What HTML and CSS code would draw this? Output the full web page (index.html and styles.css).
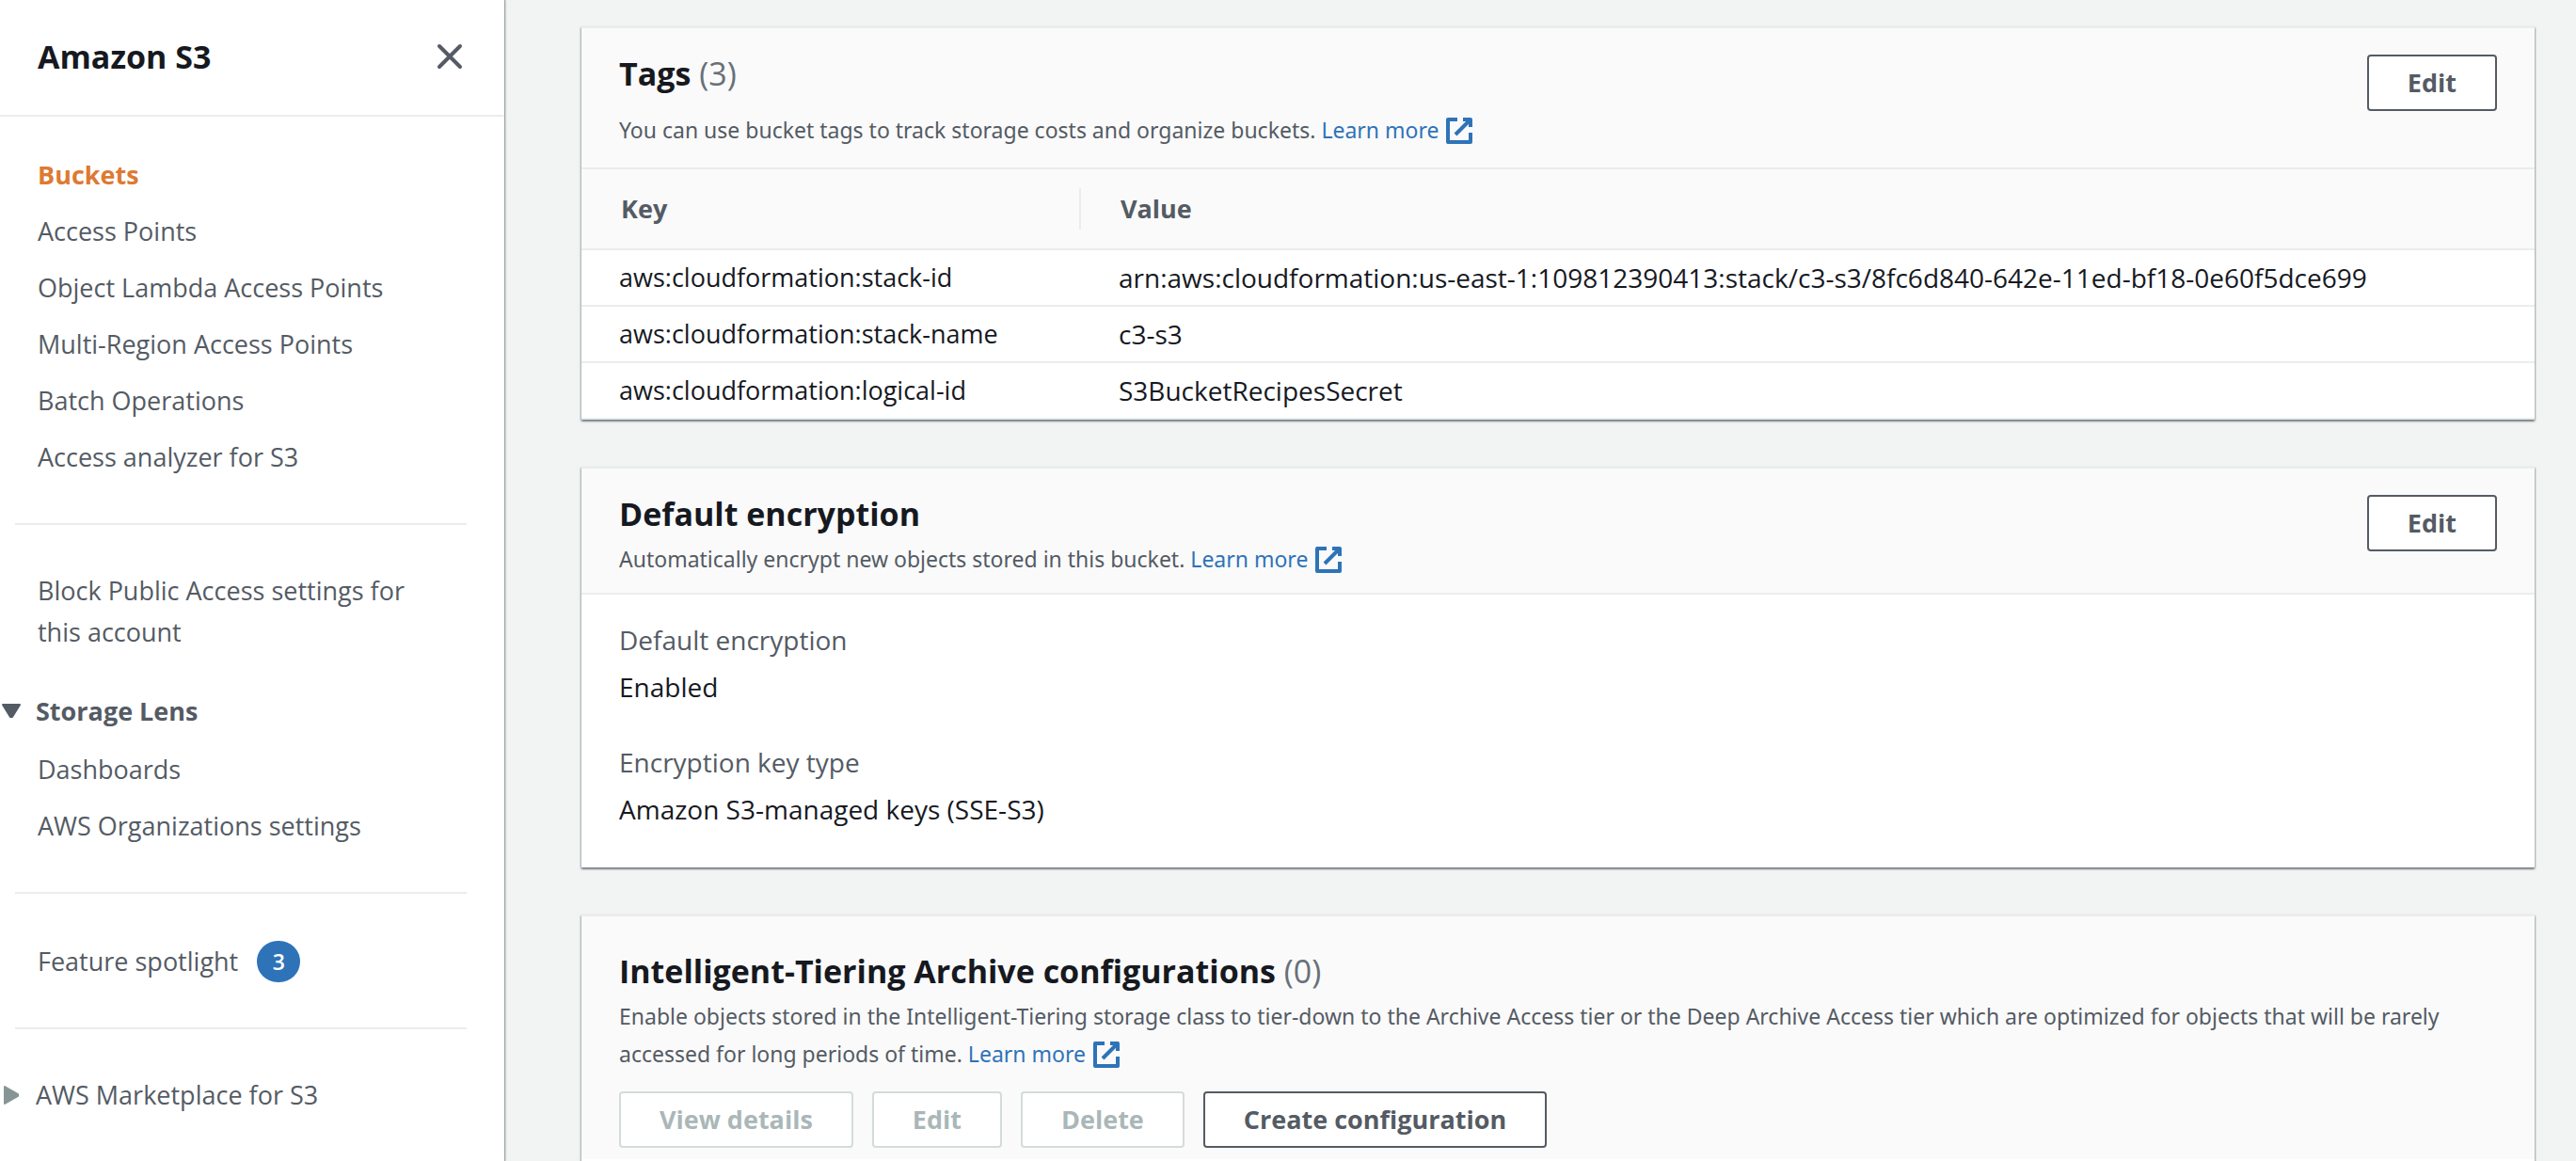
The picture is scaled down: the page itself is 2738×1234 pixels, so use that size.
FILE: index.html
```html
<!DOCTYPE html>
<html lang="en">
<head>
<meta charset="utf-8">
<meta name="viewport" content="width=device-width, initial-scale=1">
<title>Amazon S3 - Bucket properties</title>
<link rel="stylesheet" href="styles.css">
</head>
<body>
<svg class="sprite" aria-hidden="true">
  <symbol id="external" viewBox="0 0 16 16"><path d="M10 2h4v4M6 10l8-8M14 9.048V14H2V2h5" fill="none" stroke="currentColor" stroke-width="2" stroke-linejoin="round"/></symbol>
</svg>
<div class="layout">
  <aside class="sidebar">
    <header class="sidebar-header">
      <h2 class="sidebar-title">Amazon S3</h2>
      <button class="close" type="button" aria-label="Close navigation">
        <svg viewBox="0 0 32 32"><path d="M5 5l22 22M27 5L5 27" fill="none" stroke="currentColor" stroke-width="4" stroke-linecap="round"/></svg>
      </button>
    </header>
    <nav class="nav" aria-label="Amazon S3">
      <ul class="nav-list">
        <li><a class="active" href="#buckets" aria-current="page">Buckets</a></li>
        <li><a href="#access-points">Access Points</a></li>
        <li><a href="#object-lambda">Object Lambda Access Points</a></li>
        <li><a href="#multi-region">Multi-Region Access Points</a></li>
        <li><a href="#batch">Batch Operations</a></li>
        <li><a href="#analyzer">Access analyzer for S3</a></li>
      </ul>
      <hr class="divider">
      <ul class="nav-list">
        <li><a href="#block-public-access">Block Public Access settings for this account</a></li>
      </ul>
      <button class="toggle toggle-open" type="button" aria-expanded="true">
        <svg class="caret" viewBox="0 0 20 20"><path d="M1 3h18L11 16H9z" fill="currentColor" stroke="currentColor" stroke-width="2" stroke-linejoin="round"/></svg>
        Storage Lens
      </button>
      <ul class="nav-list">
        <li><a href="#dashboards">Dashboards</a></li>
        <li><a href="#organizations">AWS Organizations settings</a></li>
      </ul>
      <hr class="divider">
      <ul class="nav-list">
        <li><a class="spotlight" href="#spotlight">Feature spotlight <span class="badge">3</span></a></li>
      </ul>
      <hr class="divider">
      <button class="toggle" type="button" aria-expanded="false">
        <svg class="caret caret-closed" viewBox="0 0 20 20"><path d="M3 1v18l14-8V9z" fill="currentColor" stroke="currentColor" stroke-width="2" stroke-linejoin="round"/></svg>
        AWS Marketplace for S3
      </button>
    </nav>
  </aside>

  <main class="content">
    <section class="card">
      <header class="card-header header-tags">
        <div class="heading">
          <h2>Tags <span class="count">(3)</span></h2>
          <p>You can use bucket tags to track storage costs and organize buckets. <a href="#tags-help">Learn more <svg class="external"><use href="#external"/></svg></a></p>
        </div>
        <button class="button" type="button">Edit</button>
      </header>
      <table class="tags">
        <thead>
          <tr><th class="key" scope="col"><div>Key</div></th><th scope="col">Value</th></tr>
        </thead>
        <tbody>
          <tr><td>aws:cloudformation:stack-id</td><td class="value">arn:aws:cloudformation:us-east-1:109812390413:stack/c3-s3/8fc6d840-642e-11ed-bf18-0e60f5dce699</td></tr>
          <tr><td>aws:cloudformation:stack-name</td><td class="value">c3-s3</td></tr>
          <tr><td>aws:cloudformation:logical-id</td><td class="value">S3BucketRecipesSecret</td></tr>
        </tbody>
      </table>
    </section>

    <section class="card">
      <header class="card-header header-encryption">
        <div class="heading">
          <h2>Default encryption</h2>
          <p>Automatically encrypt new objects stored in this bucket. <a href="#encryption-help">Learn more <svg class="external"><use href="#external"/></svg></a></p>
        </div>
        <button class="button" type="button">Edit</button>
      </header>
      <dl class="details">
        <div><dt>Default encryption</dt><dd>Enabled</dd></div>
        <div><dt>Encryption key type</dt><dd>Amazon S3-managed keys (SSE-S3)</dd></div>
      </dl>
    </section>

    <section class="card card-last">
      <header class="card-header header-tiering">
        <div class="heading">
          <h2>Intelligent-Tiering Archive configurations <span class="count">(0)</span></h2>
          <p>Enable objects stored in the Intelligent-Tiering storage class to tier-down to the Archive Access tier or the Deep Archive Access tier which are optimized for objects that will be rarely accessed for long periods of time. <a href="#tiering-help">Learn more <svg class="external"><use href="#external"/></svg></a></p>
        </div>
        <div class="actions">
          <button class="button" type="button" disabled>View details</button>
          <button class="button" type="button" disabled>Edit</button>
          <button class="button" type="button" disabled>Delete</button>
          <button class="button" type="button">Create configuration</button>
        </div>
      </header>
    </section>
  </main>
</div>
</body>
</html>
```
FILE: styles.css
```css
:root {
  --text: #16191f;
  --muted: #545b64;
  --line: #eaeded;
  --link: #2e73b8;
  --accent: #dd7a33;
}

* { box-sizing: border-box; }

body {
  margin: 0;
  background: #f2f3f3;
  color: var(--text);
  font: 27px/44px "Open Sans", "Noto Sans", sans-serif;
}

h2, p, ul, dl, dd { margin: 0; padding: 0; }
h2 { font-size: 34px; line-height: 40px; font-weight: 700; }
ul { list-style: none; }
a { color: var(--link); text-decoration: none; }
button { font: inherit; cursor: pointer; }
svg { display: block; }

.sprite { position: absolute; width: 0; height: 0; }

.layout {
  display: flex;
  min-height: 100vh;
}

/* Side navigation */
.sidebar {
  flex: 0 0 536px;
  background: #fff;
  color: var(--muted);
  box-shadow: 1px 0 1px rgba(0, 28, 36, .3), 2px 0 2px rgba(0, 28, 36, .1);
}

.sidebar-header {
  display: flex;
  align-items: center;
  justify-content: space-between;
  height: 124px;
  padding: 0 42px 2px 40px;
  border-bottom: 2px solid var(--line);
}

.sidebar-title { color: var(--text); }

.close {
  padding: 0;
  border: 0;
  background: none;
  color: inherit;
}

.close svg { width: 32px; height: 32px; }

.nav { padding: 32px 40px 24px 0; }

.nav-list a {
  display: block;
  padding: 8px 40px;
  color: inherit;
}

.nav-list .active { color: var(--accent); font-weight: 700; }

.divider {
  margin: 40px 0 40px 16px;
  border: 0;
  border-top: 2px solid var(--line);
}

.toggle {
  display: flex;
  align-items: center;
  gap: 16px;
  width: 100%;
  padding: 8px 0 8px 2px;
  border: 0;
  background: none;
  color: inherit;
  text-align: left;
}

.toggle-open {
  margin-top: 24px;
  padding-bottom: 10px;
  font-weight: 700;
}

.caret { width: 20px; height: 20px; }
.caret-closed { color: #879596; }

.nav-list .spotlight {
  display: flex;
  align-items: center;
  gap: 20px;
  padding: 10px 40px 8px;
}

.badge {
  width: 46px;
  border-radius: 22px;
  background: var(--link);
  color: #fff;
  font-size: 23px;
  font-weight: 600;
  text-align: center;
}

/* Cards */
.content {
  flex: 1;
  min-width: 0;
  display: flex;
  flex-direction: column;
  gap: 50px;
  padding: 28px 44px 0 82px;
}

.card {
  border-top: 2px solid var(--line);
  background: #fff;
  box-shadow: 0 2px 2px rgba(0, 28, 36, .4), 1px 1px 2px rgba(0, 28, 36, .2), -1px 1px 2px rgba(0, 28, 36, .2);
}

.card-header {
  display: flex;
  align-items: flex-start;
  justify-content: space-between;
  gap: 40px;
  padding: 28px 40px 20px;
  border-bottom: 2px solid var(--line);
  background: #fafafa;
}

.heading p {
  margin-top: 8px;
  color: var(--muted);
  font-family: "Noto Sans", "Open Sans", sans-serif;
  font-size: 23px;
  line-height: 40px;
}

.header-tags .heading p { margin-top: 20px; }
.header-encryption { padding-bottom: 16px; }

.count { color: #687078; font-weight: 400; }

.external {
  display: inline-block;
  width: 32px;
  height: 32px;
  vertical-align: -8px;
}

.button {
  flex: none;
  height: 60px;
  padding: 0 41px;
  border: 2px solid var(--muted);
  border-radius: 4px;
  background: #fff;
  color: var(--muted);
  font-weight: 700;
  line-height: 40px;
}

.button:disabled {
  border-color: #d5dbdb;
  color: #aab7b8;
  cursor: default;
}

.tags {
  width: 100%;
  border-collapse: separate;
  border-spacing: 0;
  table-layout: fixed;
}

.tags th {
  padding: 20px 42px;
  border-bottom: 2px solid var(--line);
  background: #fafafa;
  color: var(--muted);
  text-align: left;
}

.tags .key { width: 531px; padding-right: 0; }
.key div { border-right: 2px solid var(--line); }

.tags td {
  padding: 7px 40px;
  border-bottom: 2px solid var(--line);
}

.tags .value { font-size: 28px; }

.details {
  display: grid;
  gap: 36px;
  padding: 26px 40px 40px;
  font-size: 28px;
}

.details dt { margin-bottom: 6px; color: var(--muted); }

.card-last { flex: 1; }

.header-tiering {
  flex-direction: column;
  gap: 20px;
  padding: 38px 40px 12px;
  border-bottom: 0;
}

.actions { display: flex; gap: 20px; }
```
